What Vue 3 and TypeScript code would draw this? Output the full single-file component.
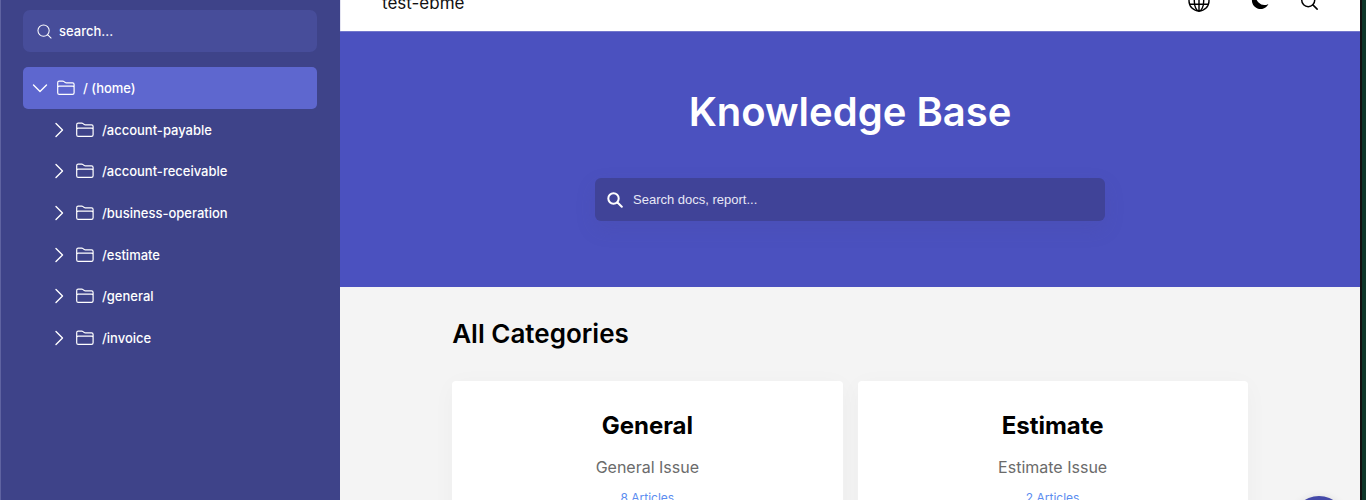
<script setup lang="ts">
interface Category {
  title: string
  summary: string
  articles: number
}

const folders: string[] = [
  '/account-payable',
  '/account-receivable',
  '/business-operation',
  '/estimate',
  '/general',
  '/invoice',
]

const categories: Category[] = [
  { title: 'General', summary: 'General Issue', articles: 8 },
  { title: 'Estimate', summary: 'Estimate Issue', articles: 2 },
]
</script>

<template>
  <div class="shell">
    <aside class="sidebar">
      <label class="side-search">
        <svg class="side-search-icon" viewBox="0 0 16 16" aria-hidden="true">
          <circle cx="7" cy="7" r="6" />
          <path d="M11.500 11.500l3.500 3.500" />
        </svg>
        <input type="text" placeholder="search..." aria-label="Search folders" />
      </label>
      <nav class="tree" aria-label="Folders">
        <button class="node active" type="button" aria-expanded="true">
          <svg class="chevron" viewBox="0 0 16 16" aria-hidden="true"><path d="M1.5 5l6.500 6.500L14.500 5" /></svg>
          <svg class="folder" viewBox="0 0 18 16" aria-hidden="true">
            <path d="M.7 12.700V2.700q0-1.500 1.500-1.500h3.600q.7 0 1.200.4l1.300 1q.4.3 1 .3h6.200q1.600 0 1.600 1.600v8.200q0 1.600-1.600 1.600H2.300Q.7 14.300.7 12.700zM.7 7.500q0-1.300 1.600-1.300h13.200q1.600 0 1.600 1.300" />
          </svg>
          <span>/ (home)</span>
        </button>
        <div class="children">
          <button v-for="name in folders" :key="name" class="node" type="button" aria-expanded="false">
            <svg class="chevron" viewBox="0 0 16 16" aria-hidden="true"><path d="M5 1.500L11.500 8 5 14.500" /></svg>
            <svg class="folder" viewBox="0 0 18 16" aria-hidden="true">
              <path d="M.7 12.700V2.700q0-1.500 1.500-1.500h3.600q.7 0 1.200.4l1.300 1q.4.3 1 .3h6.200q1.600 0 1.600 1.600v8.200q0 1.600-1.600 1.600H2.300Q.7 14.300.7 12.700zM.7 7.500q0-1.300 1.600-1.300h13.200q1.600 0 1.600 1.300" />
            </svg>
            <span>{{ name }}</span>
          </button>
        </div>
      </nav>
    </aside>

    <main class="content">
      <header class="topbar">
        <a class="brand" href="#">test-ebme</a>
        <div class="actions">
          <button type="button" aria-label="Language">
            <svg class="globe" viewBox="0 0 22 22" aria-hidden="true">
              <circle cx="11" cy="11" r="10" />
              <ellipse cx="11" cy="11" rx="4.700" ry="10" />
              <path d="M11 1v20M1.700 7.700h18.600M1.700 14.300h18.600" />
            </svg>
          </button>
          <button type="button" aria-label="Dark mode">
            <svg class="moon" viewBox="0 0 18 18" aria-hidden="true">
              <path d="M6 .6A8.600 8.600 0 1 0 17.400 11.900A8.400 8.400 0 0 1 6 .6z" />
            </svg>
          </button>
          <button type="button" aria-label="Search">
            <svg class="glass" viewBox="0 0 16 16" aria-hidden="true">
              <circle cx="6.800" cy="6.800" r="6.100" />
              <path d="M11.200 11.200l4 4" />
            </svg>
          </button>
        </div>
      </header>

      <section class="hero">
        <h1>Knowledge Base</h1>
        <label class="hero-search">
          <svg viewBox="0 0 16 16" aria-hidden="true">
            <circle cx="6.500" cy="6.500" r="5.200" />
            <path d="M10.500 10.500l4.300 4.300" />
          </svg>
          <input type="text" placeholder="Search docs, report..." aria-label="Search docs" />
        </label>
      </section>

      <section class="categories">
        <h2>All Categories</h2>
        <div class="cards">
          <article v-for="item in categories" :key="item.title" class="card">
            <h3>{{ item.title }}</h3>
            <p>{{ item.summary }}</p>
            <a href="#">{{ item.articles }} Articles</a>
          </article>
        </div>
      </section>

      <button class="fab" type="button" aria-label="Help"></button>
    </main>
    <div class="edge"></div>
  </div>
</template>

<style>
body {
  margin: 0;
}
</style>

<style scoped>
.shell {
  display: flex;
  height: 100vh;
  overflow: hidden;
  background: #f4f4f4;
  font-family: Inter, "Noto Sans", sans-serif;
}
.shell *,
.shell {
  box-sizing: border-box;
}
button {
  border: 0;
  padding: 0;
  background: none;
  font: inherit;
  color: inherit;
  cursor: pointer;
}
input {
  flex: 1;
  min-width: 0;
  padding: 0;
  border: 0;
  outline: 0;
  background: none;
}
svg {
  flex: none;
  fill: none;
  stroke: currentColor;
  stroke-linecap: round;
  stroke-linejoin: round;
}
a {
  text-decoration: none;
}
.sidebar {
  flex: none;
  width: 340px;
  padding: 10px 23px 0 22px;
  border-left: 1px solid #5f63a1;
  background: #3e4389;
  color: #fff;
  font-size: 13px;
  font-weight: 500;
}
.side-search {
  display: flex;
  align-items: center;
  gap: 7px;
  height: 42px;
  padding: 0 14px;
  border-radius: 7px;
  background: #474d9a;
}
.side-search-icon {
  width: 15px;
  height: 15px;
  stroke-width: 1.1;
}
.side-search input {
  color: #fff;
  font: inherit;
}
.side-search input::placeholder {
  color: #fff;
  opacity: 1;
}
.tree {
  margin-top: 15px;
}
.node {
  display: flex;
  align-items: center;
  width: 100%;
  text-align: left;
}
.node.active {
  height: 42px;
  padding-left: 9px;
  border-radius: 5px;
  background: #5e67cf;
}
.children {
  display: grid;
  grid-auto-rows: 1fr;
  height: 250px;
  padding-left: 28px;
}
.chevron {
  width: 16px;
  height: 16px;
  stroke-width: 1.4;
}
.folder {
  width: 18px;
  height: 16px;
  margin: 0 8px 0 9px;
  stroke-width: 1.2;
}
.content {
  position: relative;
  flex: 1;
  min-width: 0;
  overflow: hidden;
  background: #f4f4f4;
}
.topbar {
  display: flex;
  align-items: center;
  justify-content: space-between;
  height: 56px;
  margin-top: -25px;
  padding: 0 42px 0 41px;
  border-left: 1px solid #e5e5f2;
  background: #fff;
  color: #111;
}
.brand {
  color: #111;
  font-size: 17px;
}
.actions {
  display: flex;
  align-items: center;
  gap: 41px;
  padding-bottom: 4px;
  color: #000;
}
.actions button {
  display: flex;
}
.globe {
  width: 22px;
  height: 22px;
  stroke-width: 1.4;
}
.moon {
  width: 18px;
  height: 18px;
  fill: #000;
  stroke: none;
}
.glass {
  width: 17px;
  height: 17px;
  margin-left: -9px;
  stroke-width: 1.4;
}
.hero {
  height: 256px;
  padding-top: 56px;
  border-top: 1px solid #7277cc;
  background: #4b51bf;
  color: #fff;
}
h1 {
  margin: 0;
  font-size: 40px;
  font-weight: 600;
  line-height: 48px;
  text-align: center;
}
.hero-search {
  display: flex;
  align-items: center;
  gap: 10px;
  width: 50%;
  height: 43px;
  margin: 42px auto 0;
  padding: 0 12px;
  border-radius: 6px;
  background: #404398;
  box-shadow: 0 8px 20px rgba(75, 75, 140, 0.15);
}
.hero-search svg {
  width: 16px;
  height: 16px;
  stroke-width: 2;
}
.hero-search input {
  color: #e8e8f6;
  font: 13px "Liberation Sans", Arial, sans-serif;
}
.hero-search input::placeholder {
  color: #e8e8f6;
  opacity: 1;
}
.categories {
  width: 78%;
  margin: 0 auto;
  padding-top: 31px;
}
h2 {
  margin: 0;
  color: #000;
  font-size: 26px;
  font-weight: 600;
  line-height: 32px;
}
.cards {
  display: grid;
  grid-template-columns: 1fr 1fr;
  gap: 15px;
  margin-top: 31px;
}
.card {
  display: flex;
  flex-direction: column;
  align-items: center;
  padding: 30px 16px;
  border-radius: 4px;
  background: #fff;
  box-shadow: 0 4px 24px rgba(0, 0, 0, 0.03);
}
h3 {
  margin: 0;
  color: #000;
  font-size: 24px;
  font-weight: 700;
  line-height: 30px;
}
.card p {
  margin: 14px 0 0;
  color: #6b6b6b;
  font-size: 16px;
  line-height: 24px;
}
.card a {
  margin-top: 10px;
  color: #5c8df0;
  font-size: 12px;
  line-height: 18px;
}
.fab {
  position: absolute;
  right: 14px;
  bottom: -50px;
  width: 54px;
  height: 54px;
  border-radius: 50%;
  background: #4449a8;
  box-shadow: 0 2px 8px rgba(0, 0, 0, 0.15);
}
.edge {
  flex: none;
  width: 6px;
  border-left: 2px solid #111;
  background: #0d3528;
}
</style>
